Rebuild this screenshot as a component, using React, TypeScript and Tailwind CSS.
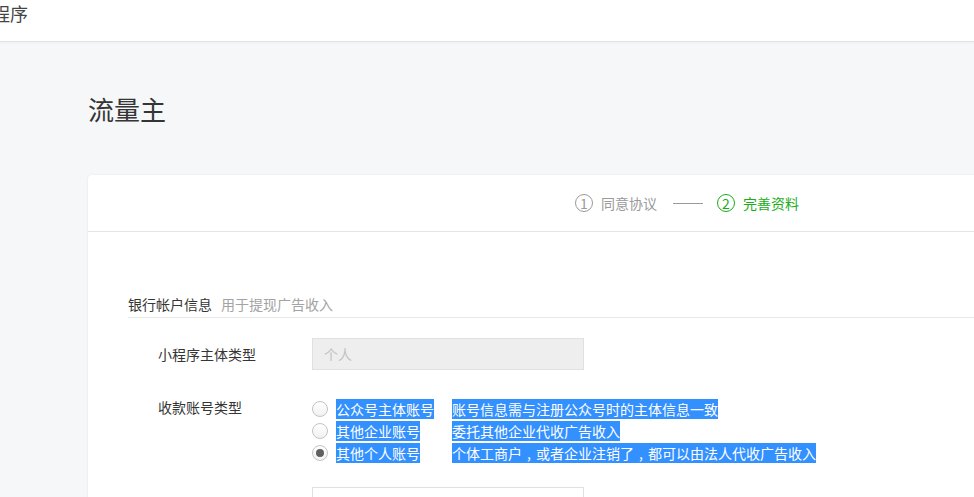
import React from "react"

// Selected-text look from the screenshot
function Hl({ children }: { children: React.ReactNode }) {
  return <span className="inline-flex h-[20px] items-center leading-[20px] bg-[#3390ff] text-white whitespace-nowrap">{children}</span>
}

function Radio({ checked }: { checked?: boolean }) {
  return (
    <span className="flex h-[16px] w-[16px] items-center justify-center rounded-full border border-[#c4c4c4] bg-gradient-to-b from-white to-[#f1f1f1]">
      {checked && <span className="h-[8px] w-[8px] rounded-full bg-[#5f5f5f]" />}
    </span>
  )
}

const Comma = () => <span className="inline-block w-[14px] text-center">,</span>

const options = [
  { label: "公众号主体账号", desc: <>账号信息需与注册公众号时的主体信息一致</> },
  { label: "其他企业账号", desc: <>委托其他企业代收广告收入</> },
  {
    label: "其他个人账号",
    desc: (
      <>
        个体工商户<Comma />或者企业注销了<Comma />都可以由法人代收广告收入
      </>
    ),
    checked: true,
  },
]

export default function App() {
  return (
    <div className="h-screen w-full overflow-hidden bg-[#f6f7f9] font-['Noto_Sans_CJK_SC','Liberation_Sans',sans-serif] text-[#353535]">
      {/* Top bar */}
      <div className="h-[42px] border-b border-[#e3e3e3] bg-white pt-[1px] shadow-[0_1px_2px_rgba(0,0,0,0.04)]">
        <div className="ml-[-26px] text-[18px] leading-[24px] text-[#444]">小程序</div>
      </div>

      <div className="pl-[88px]">
        <h1 className="pt-[49px] text-[26px] leading-[36px] font-normal">流量主</h1>

        <div className="mt-[48px] w-[1198px] rounded-tl-[4px] bg-white shadow-[0_0_3px_rgba(0,0,0,0.07)]">
          {/* Steps */}
          <div className="flex h-[57px] items-center border-b border-[#e5e5e5] pl-[487px] text-[14px]">
            <span className="flex h-[18px] w-[18px] items-center justify-center rounded-full border border-[#9a9a9a] text-[14px] leading-none text-[#9a9a9a]">1</span>
            <span className="ml-[8px] text-[#9a9a9a]">同意协议</span>
            <span className="ml-[16px] h-px w-[30px] bg-[#9a9a9a]" />
            <span className="ml-[14px] flex h-[18px] w-[18px] items-center justify-center rounded-full border border-[#1aad19] text-[14px] leading-none text-[#1aad19]">2</span>
            <span className="ml-[8px] text-[#1aad19]">完善资料</span>
          </div>

          {/* Form */}
          <div className="pl-[40px] pt-[62px]">
            <div className="flex items-center gap-[9px] border-b border-[#e7e7e7] pb-[3px] text-[14px] leading-[20px]">
              <span>银行帐户信息</span>
              <span className="text-[#a3a3a3]">用于提现广告收入</span>
            </div>

            <div className="pl-[30px] text-[14px]">
              <div className="mt-[20px] flex items-center">
                <span className="w-[154px]">小程序主体类型</span>
                <div className="flex h-[32px] w-[272px] items-center border border-[#e0e0e0] bg-[#eeeeee] pl-[11px] text-[#c2c2c2]">个人</div>
              </div>

              <div className="mt-[28px] flex">
                <span className="w-[154px] leading-[18px]">收款账号类型</span>
                <div className="flex flex-col">
                  {options.map((o) => (
                    <div key={o.label} className="flex h-[22px] items-center">
                      <Radio checked={o.checked} />
                      <span className="ml-[8px] w-[116px]">
                        <Hl>{o.label}</Hl>
                      </span>
                      <Hl>{o.desc}</Hl>
                    </div>
                  ))}
                </div>
              </div>

              <div className="mt-[23px] flex items-center">
                <span className="w-[154px]">开户名称</span>
                <div className="flex h-[32px] w-[272px] items-center border border-[#e0e0e0] bg-white pl-[11px] text-[#c2c2c2]">请输入</div>
              </div>
            </div>
          </div>
        </div>
      </div>
    </div>
  )
}
